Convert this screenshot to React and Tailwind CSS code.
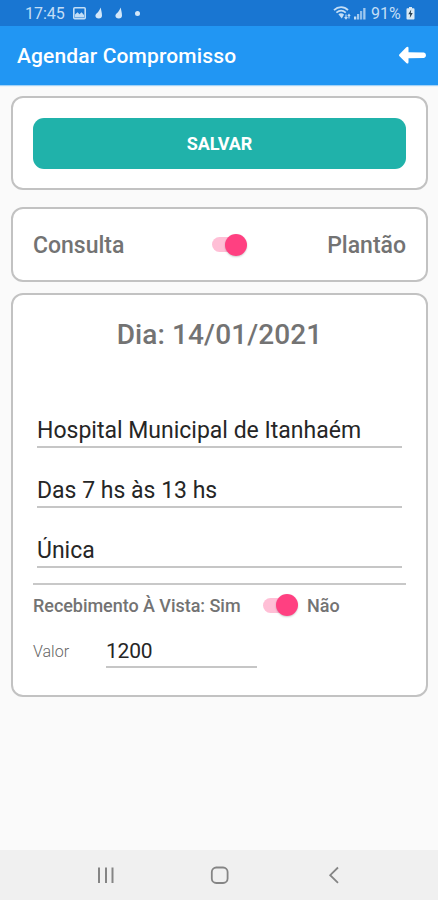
import React from 'react'
import { useState } from 'react'

function StatusBar() {
  return (
    <div className="h-[26px] bg-[#1976d2] flex items-center justify-between pl-[25px] pr-[23px] text-[#c3def6]">
      <div className="flex items-center">
        <span className="w-[40px] text-[16px] leading-[26px] pt-px whitespace-nowrap">17:45</span>
        <svg className="ml-[8px]" width="13" height="13" viewBox="0 0 13 13" fill="none">
          <rect x="0.8" y="0.8" width="11.4" height="11" rx="1" stroke="currentColor" strokeWidth="1.6" />
          <path d="M2 10.2V7.500l2.500-2.200 2 2 2-2L11 8v2.400H2z" fill="currentColor" />
        </svg>
        <Drop className="ml-[9px]" />
        <Drop className="ml-[12px]" />
        <span className="ml-[12px] w-[5px] h-[5px] rounded-full bg-[#d3e7f9]" />
      </div>

      <div className="flex items-center">
        <svg className="-mt-px" width="18" height="14" viewBox="0 0 18 14" fill="none" stroke="currentColor">
          <path d="M1 4.2C5.2.2 11 .2 15 4.2" strokeWidth="1.8" />
          <path d="M3.4 6.6c3-2.6 6.4-2.6 9.4 0" strokeWidth="1.8" />
          <path d="M5.4 8.3L8.800 12.600 11 8.500c-1.700-1.400-3.900-1.600-5.600-.2z" fill="currentColor" stroke="none" />
          <path d="M13 8.500v4M11.600 11.200L13 12.900l1.400-1.700M16 12.500v-4M14.800 10L16 8.500l1.200 1.500" strokeWidth="1.100" />
        </svg>
        <svg className="ml-[3px]" width="12" height="13" viewBox="0 0 12 13" fill="currentColor">
          <rect x="0" y="9.5" width="2.300" height="3" />
          <rect x="3" y="7" width="2.200" height="5.5" opacity="0.8" />
          <rect x="6" y="4" width="2.200" height="8.5" opacity="0.7" />
          <rect x="9.2" y="1" width="2.300" height="11.500" opacity="0.8" />
        </svg>
        <span className="ml-[5px] w-[32px] text-[16px] leading-[26px] pt-px whitespace-nowrap">91%</span>
        <svg className="ml-[3px]" width="9" height="13" viewBox="0 0 9 13">
          <path d="M3 0h3v1.3h1.6c.6 0 .9.3.9.9v9.4c0 .6-.3.9-.9.9H1.4c-.6 0-.9-.3-.9-.9V2.200c0-.6.3-.9.9-.9H3z" fill="#d9e9f5" />
          <path d="M5.200 2.500L2.300 7.300h1.900L3.800 11l2.900-4.900H4.800z" fill="#263f52" />
        </svg>
      </div>
    </div>
  )
}

function Drop({ className }) {
  return (
    <svg className={className} width="8" height="12" viewBox="0 0 8 12" fill="#d3e7f9">
      <path d="M5.800.5C6 3 7 5.500 7 8.500 7 10.500 5.800 11.500 3.800 11.500 1.800 11.500.3 10.500.4 8.600.6 7 2.300 5.900 3.300 4.700 4.300 3.500 4.800 2 5.800.5z" />
    </svg>
  )
}

function Switch({ checked, onChange }) {
  return (
    <button
      type="button"
      onClick={() => onChange(!checked)}
      className={`flex items-center w-[35px] h-[22px] ${checked ? "justify-end" : "justify-start"}`}
    >
      <span className={`w-[26px] h-[15px] -mr-[13px] rounded-full ${checked ? "bg-[#ffbfd6]" : "bg-gray-300"}`} />
      <span
        className={`relative w-[22px] h-[22px] shrink-0 rounded-full shadow-[0_1px_2px_rgba(0,0,0,0.2)] ${
          checked ? "bg-[#ff4081]" : "bg-gray-50"
        }`}
      />
    </button>
  )
}

function Card({ className, children }) {
  return (
    <div className={`ml-[11px] mr-[10px] bg-white border-2 border-[#c2c2c2] rounded-[12px] ${className}`}>
      {children}
    </div>
  )
}

function Field({ value, onChange, className }) {
  return (
    <input
      type="text"
      value={value}
      onChange={onChange}
      className={`block bg-transparent border-b-2 border-[#c6c6c6] text-[#262626] outline-none ${className}`}
    />
  )
}

function App() {
  const [plantao, setPlantao] = useState(true)
  const [naoVista, setNaoVista] = useState(true)
  const [form, setForm] = useState({
    local: "Hospital Municipal de Itanhaém",
    horario: "Das 7 hs às 13 hs",
    repeticao: "Única",
    valor: "1200"
  })

  const handleChange = (name) => (e) => {
    setForm({ ...form, [name]: e.target.value })
  }

  return (
    <div className="w-full h-screen min-h-[900px] bg-[#fafafa] flex flex-col overflow-hidden font-['Roboto',sans-serif]">
      <StatusBar />

      <div className="h-[59px] bg-[#2196f3] flex items-center justify-between pl-[17px] pr-[11px] shadow-[0_1px_1px_rgba(33,150,243,0.4)]">
        <h1 className="pt-[2px] text-[21px] tracking-[0.14px] font-medium text-white whitespace-nowrap">Agendar Compromisso</h1>
        <svg width="29" height="19" viewBox="0 0 29 19" fill="white">
          <path d="M1.500 8.300L8.300 1.300Q10.500-.2 10.500 2.200V6.200L26 6.600Q28 7 28 9.300T26 12L10.500 12.200V16Q10.500 18.500 8.300 17L1.500 10.300Q.5 9.300 1.500 8.300z" />
        </svg>
      </div>

      <Card className="mt-[11px] h-[94px] px-[20px] pt-[20px]">
        <button
          type="button"
          className="w-full h-[51px] rounded-[11px] bg-[#20b2aa] text-white text-[18px] tracking-[-0.1px] font-bold"
        >
          SALVAR
        </button>
      </Card>

      <Card className="mt-[17px] h-[75px] px-[20px] flex items-center text-[23px] font-medium text-[#737373]">
        <span className="pt-[4px] w-[179px]">Consulta</span>
        <Switch checked={plantao} onChange={setPlantao} />
        <span className="pt-[4px] flex-1 text-right">Plantão</span>
      </Card>

      <Card className="mt-[11px] h-[404px] px-[20px]">
        <h2 className="mt-[23px] h-[34px] leading-[34px] text-center text-[28px] tracking-[0.1px] font-medium text-[#737373]">
          Dia: 14/01/2021
        </h2>

        <div className="mt-[61px] mx-[4px]">
          <Field value={form.local} onChange={handleChange("local")} className="w-full h-[35px] pt-[2px] text-[23px]" />
          <Field value={form.horario} onChange={handleChange("horario")} className="w-full mt-[25px] h-[35px] pt-[2px] text-[23px]" />
          <Field value={form.repeticao} onChange={handleChange("repeticao")} className="w-full mt-[25px] h-[35px] pt-[2px] text-[23px]" />
        </div>

        <div className="mt-[15px] border-t-2 border-[#c8c8c8]" />

        <div className="mt-[9px] h-[22px] flex items-center text-[18px] font-medium text-[#737373]">
          <span className="w-[230px] pt-px tracking-[-0.04px] whitespace-nowrap">Recebimento À Vista: Sim</span>
          <Switch checked={naoVista} onChange={setNaoVista} />
          <span className="ml-[9px] pt-px">Não</span>
        </div>

        <div className="mt-[18px] flex items-center">
          <span className="w-[73px] pt-[2px] text-[16px] font-light text-[#666]">Valor</span>
          <Field value={form.valor} onChange={handleChange("valor")} className="w-[151px] h-[34px] pt-[2px] text-[21px] tracking-[-0.2px]" />
        </div>
      </Card>

      <div className="mt-auto h-[50px] bg-[#f0f0f0] flex items-center text-[#858585]">
        <svg className="ml-[97px]" width="18" height="18" viewBox="0 0 18 18" fill="currentColor">
          <rect x="1" y="1.500" width="2" height="15.500" />
          <rect x="8" y="1.500" width="2" height="15.500" />
          <rect x="14.500" y="1.500" width="2" height="15.500" />
        </svg>
        <svg className="ml-[95px]" width="20" height="20" viewBox="0 0 20 20" fill="none" stroke="currentColor" strokeWidth="1.800">
          <rect x="1.800" y="2.500" width="15.800" height="15.500" rx="4.500" />
        </svg>
        <svg className="ml-[98px]" width="12" height="18" viewBox="0 0 12 18" fill="none" stroke="currentColor" strokeWidth="1.800">
          <path d="M10 1.500L2.200 9.200 10 16.800" />
        </svg>
      </div>
    </div>
  )
}

export default App
